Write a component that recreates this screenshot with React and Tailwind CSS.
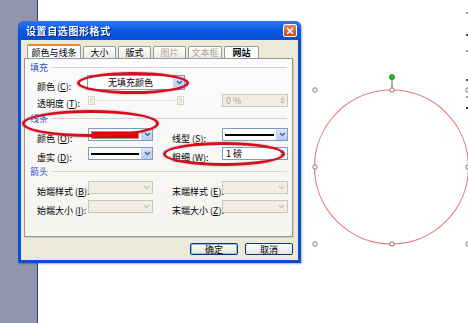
import React from "react";

const font = { fontFamily: '"Noto Sans CJK SC", "Liberation Sans", sans-serif' };

const Label = ({ text, k, className = "" }) => (
  <span className={"text-[9px] leading-none text-black whitespace-nowrap " + className}>
    {text} (<span className="underline">{k}</span>):
  </span>
);

const Arrow = ({ disabled }) => (
  <div
    className={
      "w-[11px] h-full flex items-center justify-center " +
      (disabled ? "bg-[#f0efe6]" : "bg-gradient-to-b from-[#dce6fd] to-[#b6cbf7] border-l border-[#c3d3fd] rounded-[1px]")
    }
  >
    <svg width="7" height="5" viewBox="0 0 7 5">
      <path d="M1 1 L3.5 3.5 L6 1" fill="none" stroke={disabled ? "#c9c7ba" : "#4d6185"} strokeWidth="1.4" />
    </svg>
  </div>
);

const Select = ({ w, children, disabled, h = "h-[13px]" }) => (
  <div
    className={
      "flex items-stretch border " + h + " " +
      (disabled ? "border-[#c9c7ba] bg-[#f1efe4]" : "border-[#7f9db9] bg-white")
    }
    style={{ width: w }}
  >
    <div className="flex-1 flex items-center px-[2px] overflow-hidden">{children}</div>
    <Arrow disabled={disabled} />
  </div>
);

const Section = ({ title, className = "" }) => (
  <div className={"flex items-center h-[10px] pl-[5px] pr-[5px] " + className}>
    <span className="text-[9px] leading-none text-[#1f4fc9]">{title}</span>
    <div className="flex-1 ml-[4px] h-px bg-[#d6d5c8]" />
  </div>
);

const Spin = ({ w, text, disabled }) => (
  <div
    className={
      "flex items-stretch border h-[13px] " +
      (disabled ? "border-[#c9c7ba] bg-[#f1efe4] text-[#a8a69a]" : "border-[#7f9db9] bg-white text-black")
    }
    style={{ width: w }}
  >
    <div className="flex-1 flex items-center pl-[3px] text-[9px] leading-none">{text}</div>
    <div className="w-[9px] flex flex-col items-center justify-center gap-[1px]">
      <svg width="5" height="3" viewBox="0 0 5 3"><path d="M0 3 L2.5 0 L5 3Z" fill={disabled ? "#c9c7ba" : "#4d6185"} /></svg>
      <svg width="5" height="3" viewBox="0 0 5 3"><path d="M0 0 L2.5 3 L5 0Z" fill={disabled ? "#c9c7ba" : "#4d6185"} /></svg>
    </div>
  </div>
);

const Tab = ({ children, active, selected, disabled }) => (
  <div
    className={
      "flex items-center justify-center text-[9px] leading-none border border-b-0 rounded-t-[2px] " +
      (selected
        ? "h-[15px] bg-[#fcfcfe] border-[#919b9c] border-t-2 border-t-[#e68b2c] z-10 -mb-px"
        : active
        ? "h-[12px] bg-white border-[#919b9c] font-bold"
        : "h-[12px] bg-gradient-to-b from-white to-[#ecebe5] border-[#919b9c]") +
      (disabled ? " text-[#aca899]" : " text-black")
    }
  >
    {children}
  </div>
);

function Dialog() {
  return (
    <div className="absolute left-[18px] top-[21px] w-[283px] h-[242px] flex flex-col bg-[#0a4fd6] rounded-t-[6px] px-[3px] pb-[3px] shadow-[1px_1px_2px_rgba(0,0,0,0.3)]">
      <div className="h-[19px] flex items-center justify-between bg-gradient-to-b from-[#2c77ef] via-[#0a5ae0] to-[#0650d4] -mx-[3px] pl-[8px] pr-[4px] rounded-t-[6px]">
        <span className="text-white text-[10px] font-bold leading-none tracking-[0.6px] drop-shadow-[1px_1px_0_#0a2a80]">设置自选图形格式</span>
        <div className="w-[14px] h-[13px] rounded-[2px] border border-white bg-gradient-to-b from-[#e8885a] to-[#c8421c] flex items-center justify-center">
          <svg width="8" height="8" viewBox="0 0 8 8">
            <path d="M1 1 L7 7 M7 1 L1 7" stroke="white" strokeWidth="1.6" />
          </svg>
        </div>
      </div>
      <div className="flex-1 bg-[#ece9d8] flex flex-col px-[3px] pt-[2px]">
        <div className="flex items-end gap-[2px] pl-[3px] h-[16px]">
          <div className="w-[54px]"><Tab selected>颜色与线条</Tab></div>
          <div className="w-[33px]"><Tab>大小</Tab></div>
          <div className="w-[33px]"><Tab>版式</Tab></div>
          <div className="w-[33px]"><Tab disabled>图片</Tab></div>
          <div className="w-[34px]"><Tab disabled>文本框</Tab></div>
          <div className="w-[35px]"><Tab active>网站</Tab></div>
        </div>
        <div className="h-[179px] w-[269px] border border-[#919b9c] bg-gradient-to-b from-[#fcfcfe] to-[#f4f3ee] flex flex-col shadow-[1px_1px_0_#d0cfc4]">
          <Section title="填充" className="mt-[3px]" />
          <div className="flex items-center h-[15px] mt-[3px] pl-[12px]">
            <div className="w-[50px]"><Label text="颜色" k="C" /></div>
            <Select w="98px" h="h-[15px]">
              <span className="w-full text-center text-[9px] leading-none">无填充颜色</span>
            </Select>
          </div>
          <div className="flex items-center h-[14px] mt-[3px] pl-[12px]">
            <div className="w-[51px]"><Label text="透明度" k="T" /></div>
            <div className="w-[96px] h-[9px] flex items-center justify-between">
              <div className="w-[7px] h-[9px] border border-[#d6d4c8] bg-[#f4f3ee] flex items-center justify-center">
                <svg width="3" height="5" viewBox="0 0 3 5"><path d="M3 0 L0 2.5 L3 5" fill="none" stroke="#c9c7ba" /></svg>
              </div>
              <div className="flex-1 h-px bg-[#e4e2d8] mx-[2px]" />
              <div className="w-[7px] h-[9px] border border-[#d6d4c8] bg-[#f4f3ee] flex items-center justify-center">
                <svg width="3" height="5" viewBox="0 0 3 5"><path d="M0 0 L3 2.5 L0 5" fill="none" stroke="#c9c7ba" /></svg>
              </div>
            </div>
            <div className="ml-[38px]"><Spin w="66px" text="0 %" disabled /></div>
          </div>
          <Section title="线条" className="mt-[6px]" />
          <div className="flex items-center h-[13px] mt-[5px] pl-[12px]">
            <div className="w-[51px]"><Label text="颜色" k="O" /></div>
            <Select w="65px">
              <div className="w-full h-[8px] bg-[#e60000] border border-[#999]" />
            </Select>
            <div className="w-[50px] ml-[19px]"><Label text="线型" k="S" /></div>
            <Select w="66px">
              <div className="w-full h-[2px] bg-black" />
            </Select>
          </div>
          <div className="flex items-center h-[13px] mt-[6px] pl-[12px]">
            <div className="w-[51px]"><Label text="虚实" k="D" /></div>
            <Select w="65px">
              <div className="w-full h-[2px] bg-black" />
            </Select>
            <div className="w-[50px] ml-[19px]"><Label text="粗细" k="W" /></div>
            <Spin w="66px" text="1 磅" />
          </div>
          <Section title="箭头" className="mt-[6px]" />
          <div className="flex items-center h-[13px] mt-[5px] pl-[12px]">
            <div className="w-[51px]"><Label text="始端样式" k="B" /></div>
            <Select w="65px" disabled />
            <div className="w-[50px] ml-[19px]"><Label text="末端样式" k="E" /></div>
            <Select w="66px" disabled />
          </div>
          <div className="flex items-center h-[13px] mt-[6px] pl-[12px]">
            <div className="w-[51px]"><Label text="始端大小" k="I" /></div>
            <Select w="65px" disabled />
            <div className="w-[50px] ml-[19px]"><Label text="末端大小" k="Z" /></div>
            <Select w="66px" disabled />
          </div>
        </div>
        <div className="flex justify-end gap-[7px] mt-[6px] pr-[2px]">
          <button className="w-[48px] h-[12px] rounded-[2px] border border-[#003c74] bg-gradient-to-b from-white to-[#e6e5dd] text-[9px] leading-none text-black shadow-[inset_0_0_0_1px_#9bb8ef]">确定</button>
          <button className="w-[48px] h-[12px] rounded-[2px] border border-[#003c74] bg-gradient-to-b from-white to-[#e6e5dd] text-[9px] leading-none text-black">取消</button>
        </div>
      </div>
    </div>
  );
}

function Shape() {
  const handles = [
    [315, 90], [392, 90], [315, 167], [315, 244], [392, 244], [468, 167], [468, 244], [468, 90],
  ];
  return (
    <svg className="absolute left-0 top-0" width="468" height="323" viewBox="0 0 468 323">
      <circle cx="391.5" cy="167" r="77" fill="none" stroke="#ea7a7c" strokeWidth="1.2" />
      <line x1="392" y1="77" x2="392" y2="90" stroke="#777" strokeWidth="1.2" />
      <circle cx="392" cy="77" r="2.6" fill="#22c322" stroke="#2a7a2a" strokeWidth="0.8" />
      {handles.map(([x, y], i) => (
        <circle key={i} cx={x} cy={y} r="2.2" fill="white" stroke="#666" strokeWidth="0.9" />
      ))}
      {[13, 35, 51, 80, 97, 108].map((y, i) => (
        <rect key={i} x="466" y={y - 1} width="2" height="2" fill={i % 2 ? "#444" : "#999"} />
      ))}
    </svg>
  );
}

export default function App() {
  return (
    <div className="relative w-[468px] h-[323px] overflow-hidden bg-white flex" style={font}>
      <div className="w-[38px] h-full bg-[#9096ad] border-r border-[#3e4150]" />
      <div className="flex-1 h-full bg-white" />
      <Shape />
      <Dialog />
      {/* red annotation ellipses */}
      <div className="absolute left-[77px] top-[72px] w-[112px] h-[22px] rounded-[50%] border-[3px] border-[#d5101e] shadow-[0_0_2px_rgba(200,0,0,0.5)]" />
      <div className="absolute left-[22px] top-[110px] w-[137px] h-[27px] rounded-[50%] border-[3px] border-[#d5101e] shadow-[0_0_2px_rgba(200,0,0,0.5)]" />
      <div className="absolute left-[163px] top-[142px] w-[122px] h-[24px] rounded-[50%] border-[3px] border-[#d5101e] shadow-[0_0_2px_rgba(200,0,0,0.5)]" />
    </div>
  );
}
